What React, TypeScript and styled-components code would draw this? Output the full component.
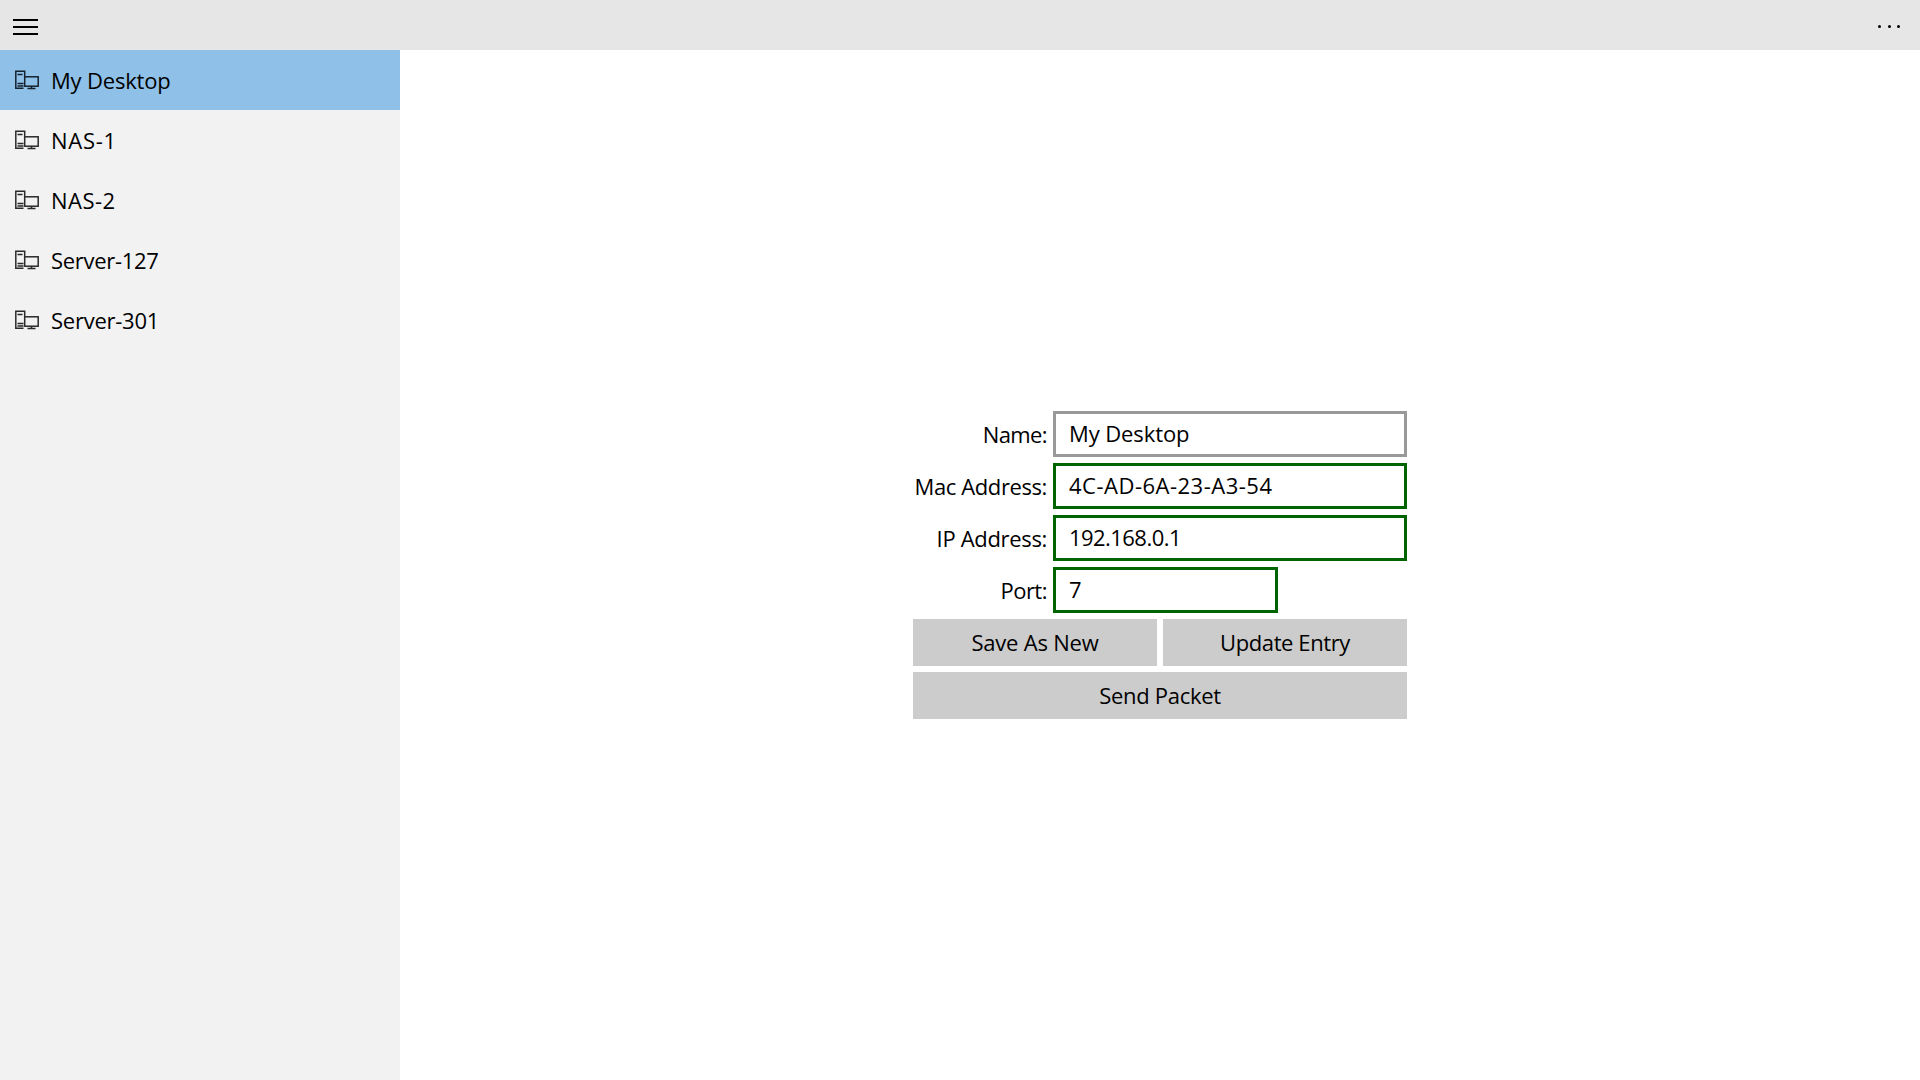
import React from 'react';
import styled, { createGlobalStyle } from 'styled-components';

// Open Sans runs a little off Segoe UI, so each string carries its own tracking
const entries = [
  { name: 'My Desktop', tracking: -0.18 },
  { name: 'NAS-1', tracking: 0.7 },
  { name: 'NAS-2', tracking: 0.5 },
  { name: 'Server-127', tracking: -0.3 },
  { name: 'Server-301', tracking: -0.25 },
];

const GlobalStyle = createGlobalStyle`
  html, body {
    margin: 0;
    padding: 0;
    background: #fff;
  }
  body {
    font-family: 'Open Sans', 'Noto Sans', 'Liberation Sans', sans-serif;
    color: #000;
  }
`;

const MachineIcon = () => (
  <IconSvg viewBox="0 0 24 20" width="24" height="20">
    <g fill="none" stroke="currentColor" strokeWidth="1.5">
      <path d="M8.5 18.2H.8V1.2h8.9v5" />
      <path d="M2.5 4.5h5M2.5 13.5h6M2.5 16h6" />
      <rect x="9.7" y="6.8" width="13.5" height="9.4" />
      <path d="M16.5 16.2v2.2M12.5 18.6h8" />
    </g>
  </IconSvg>
);

const App = () => {
  return (
    <Page>
      <GlobalStyle />
      <TopBar>
        <MenuButton aria-label="menu">
          <span />
          <span />
          <span />
        </MenuButton>
        <MoreButton aria-label="more">
          <i />
          <i />
          <i />
        </MoreButton>
      </TopBar>
      <Body>
        <Sidebar>
          {entries.map((entry, index) => (
            <SideItem key={entry.name} $selected={index === 0} $tracking={entry.tracking}>
              <MachineIcon />
              <span>{entry.name}</span>
            </SideItem>
          ))}
        </Sidebar>
        <Content>
          <Form>
            <Row>
              <Label $tracking={-0.6}>Name:</Label>
              <Field $valid={false} $tracking={-0.1} defaultValue="My Desktop" />
            </Row>
            <Row>
              <Label $tracking={-0.4}>Mac Address:</Label>
              <Field $valid $tracking={0.5} defaultValue="4C-AD-6A-23-A3-54" />
            </Row>
            <Row>
              <Label $tracking={-0.33}>IP Address:</Label>
              <Field $valid $tracking={-0.55} defaultValue="192.168.0.1" />
            </Row>
            <Row>
              <Label $tracking={-0.5}>Port:</Label>
              <Field $valid $short defaultValue="7" />
            </Row>
            <Buttons>
              <Button $tracking={-0.2}>Save As New</Button>
              <Button $tracking={-0.4}>Update Entry</Button>
              <WideButton $tracking={-0.3}>Send Packet</WideButton>
            </Buttons>
          </Form>
        </Content>
      </Body>
    </Page>
  );
};

export default App;

const Page = styled.div`
  width: 1920px;
  height: 1080px;
  display: flex;
  flex-direction: column;
  overflow: hidden;
`;

const TopBar = styled.header`
  height: 50px;
  flex-shrink: 0;
  background: #e6e6e6;
  display: flex;
  align-items: flex-start;
  justify-content: space-between;
`;

const MenuButton = styled.div`
  width: 51px;
  height: 50px;
  box-sizing: border-box;
  padding: 19px 13px 0;
  display: flex;
  flex-direction: column;
  gap: 5px;

  span {
    display: block;
    height: 2px;
    background: #000;
  }
`;

const MoreButton = styled.div`
  display: flex;
  gap: 6.5px;
  padding: 25px 20px 0 0;

  i {
    display: block;
    width: 3px;
    height: 3px;
    background: #000;
    border-radius: 50%;
  }
`;

const Body = styled.div`
  flex: 1;
  display: flex;
  min-height: 0;
`;

const Sidebar = styled.nav`
  width: 400px;
  flex-shrink: 0;
  background: #f2f2f2;
`;

const SideItem = styled.div<{ $selected: boolean; $tracking: number }>`
  height: 60px;
  display: flex;
  align-items: center;
  padding-left: 15px;
  gap: 12px;
  font-size: 22px;
  letter-spacing: ${({ $tracking }) => $tracking}px;
  color: #000;
  background: ${({ $selected }) => ($selected ? '#8fc0e8' : 'transparent')};

  svg {
    color: ${({ $selected }) => ($selected ? '#15222e' : '#2a2a2a')};
  }
`;

const IconSvg = styled.svg`
  display: block;
  flex-shrink: 0;
`;

const Content = styled.main`
  flex: 1;
  display: flex;
  align-items: center;
  justify-content: center;
  background: #fff;
`;

const Form = styled.div`
  width: 494px;
  display: flex;
  flex-direction: column;
  gap: 6px;
`;

const Row = styled.div`
  display: flex;
  align-items: center;
  height: 46px;
`;

const Label = styled.label<{ $tracking: number }>`
  width: 134px;
  margin-right: 6px;
  flex-shrink: 0;
  text-align: right;
  font-size: 22px;
  letter-spacing: ${({ $tracking }) => $tracking}px;
  white-space: nowrap;
`;

const Field = styled.input<{ $valid: boolean; $short?: boolean; $tracking?: number }>`
  width: ${({ $short }) => ($short ? '225px' : '354px')};
  height: 46px;
  box-sizing: border-box;
  border: 3px solid ${({ $valid }) => ($valid ? '#006400' : '#999999')};
  border-radius: 0;
  outline: none;
  background: #fff;
  padding: 0 0 2px 13px;
  margin: 0;
  font-family: inherit;
  font-size: 22px;
  letter-spacing: ${({ $tracking }) => $tracking ?? 0}px;
  color: #000;
`;

const Buttons = styled.div`
  display: grid;
  grid-template-columns: 1fr 1fr;
  gap: 6px;
`;

const Button = styled.button<{ $tracking: number }>`
  height: 47px;
  border: none;
  border-radius: 0;
  padding: 0 0 2px;
  margin: 0;
  background: #cccccc;
  font-family: inherit;
  font-size: 22px;
  letter-spacing: ${({ $tracking }) => $tracking}px;
  color: #000;
`;

const WideButton = styled(Button)`
  grid-column: 1 / -1;
`;
